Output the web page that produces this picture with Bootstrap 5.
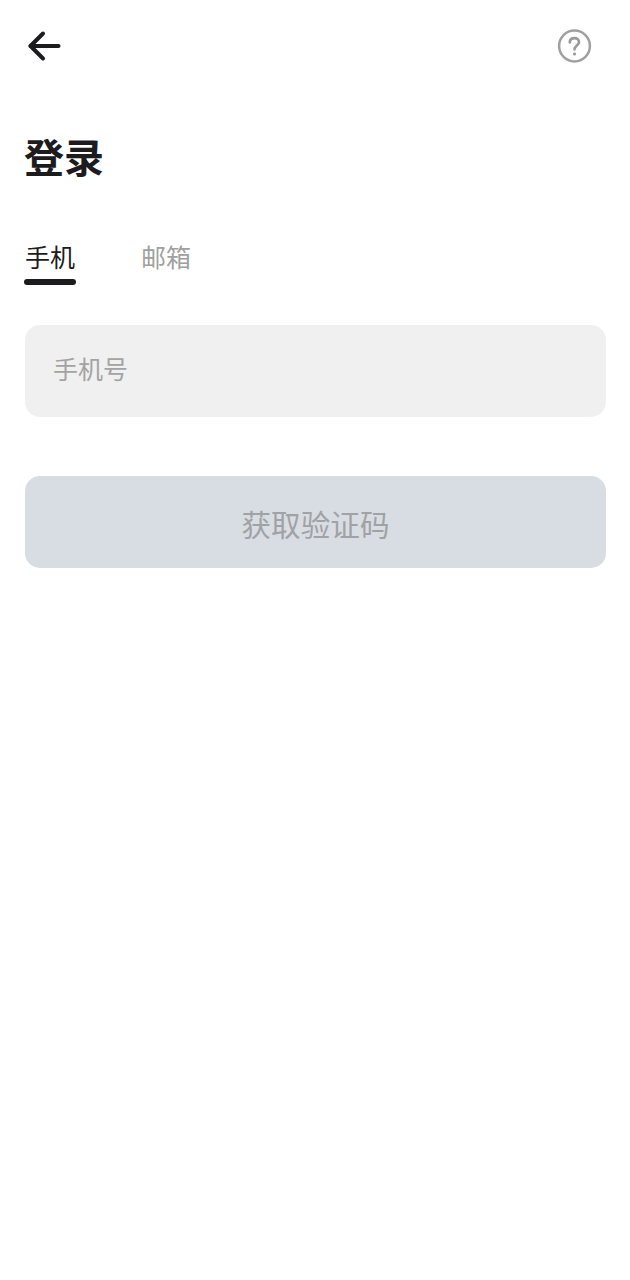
<!DOCTYPE html>
<html lang="zh">
<head>
<meta charset="utf-8">
<title>登录</title>
<link href="https://cdn.jsdelivr.net/npm/bootstrap@5.3.0/dist/css/bootstrap.min.css" rel="stylesheet">
<style>
html, body { height: 100%; }
body { background: #fff; font-family: "Noto Sans CJK SC", "Liberation Sans", sans-serif; color: #1c1c1e; }
.screen { padding: 0 24px 0 25px; }
.top-bar { height: 92px; padding-left: 2px; padding-right: 14px; }
.back-icon { width: 36px; height: 32px; }
.help-icon { width: 36px; height: 36px; }
.page-title { font-size: 40px; font-weight: 700; line-height: 52px; margin: 38px 0 0 -1px; color: #1c1c1e; }
.tab-row { margin-top: 56px; gap: 65px; }
.tab-item { font-size: 25px; line-height: 36px; color: #a0a0a0; padding: 0; background: none; border: 0; }
.tab-item.is-on { color: #1c1c1e; }
.tab-line { height: 6px; width: 52px; margin: 5px 0 0 -1px; background: #1c1c1e; border-radius: 3px; }
.phone-field { display: block; width: 100%; height: 92px; margin-top: 40px; padding: 0 28px 6px; font-size: 25px; line-height: 36px; background: #f0f0f0; border: 0; border-radius: 15px; color: #1c1c1e; }
.phone-field::placeholder { color: #a3a3a3; opacity: 1; }
.phone-field:focus { background: #f0f0f0; box-shadow: none; }
.code-btn { display: block; width: 100%; height: 92px; margin-top: 59px; padding: 4px 0 0; font-size: 29.6px; line-height: 44px; background: #d8dde4; border: 0; border-radius: 15px; color: #a0a2a4; }
.code-btn:disabled { background: #d8dde4; color: #a0a2a4; opacity: 1; }
</style>
</head>
<body>
<div class="screen">
  <div class="top-bar d-flex align-items-center justify-content-between">
    <svg class="back-icon" viewBox="0 0 36 32" fill="none" stroke="#1c1c1e" stroke-width="4" stroke-linecap="round" stroke-linejoin="round" aria-label="返回">
      <path d="M3.500 16H31.500"/><path d="M16 3.500L3.500 16L16 28.500"/>
    </svg>
    <svg class="help-icon" viewBox="0 0 36 36" fill="none" stroke="#a0a0a0" stroke-width="2.500" stroke-linecap="round" aria-label="帮助">
      <circle cx="18.500" cy="18" r="15.400"/>
      <path d="M13.800 14.500C13.800 11.700 15.800 10.200 18.500 10.200C21.100 10.200 23 11.800 23 14.200C23 17.300 18.500 17.700 18.500 21.300" stroke="#999" stroke-width="2.700"/>
      <circle cx="18.500" cy="26" r="1.600" fill="#999" stroke="none"/>
    </svg>
  </div>
  <h1 class="page-title">登录</h1>
  <div class="tab-row d-flex">
    <div>
      <button type="button" class="tab-item is-on d-block">手机</button>
      <div class="tab-line"></div>
    </div>
    <div><button type="button" class="tab-item d-block">邮箱</button></div>
  </div>
  <input class="phone-field form-control" type="tel" placeholder="手机号">
  <button type="button" class="code-btn btn" disabled>获取验证码</button>
</div>
<script src="https://cdn.jsdelivr.net/npm/bootstrap@5.3.0/dist/js/bootstrap.bundle.min.js"></script>
</body>
</html>
